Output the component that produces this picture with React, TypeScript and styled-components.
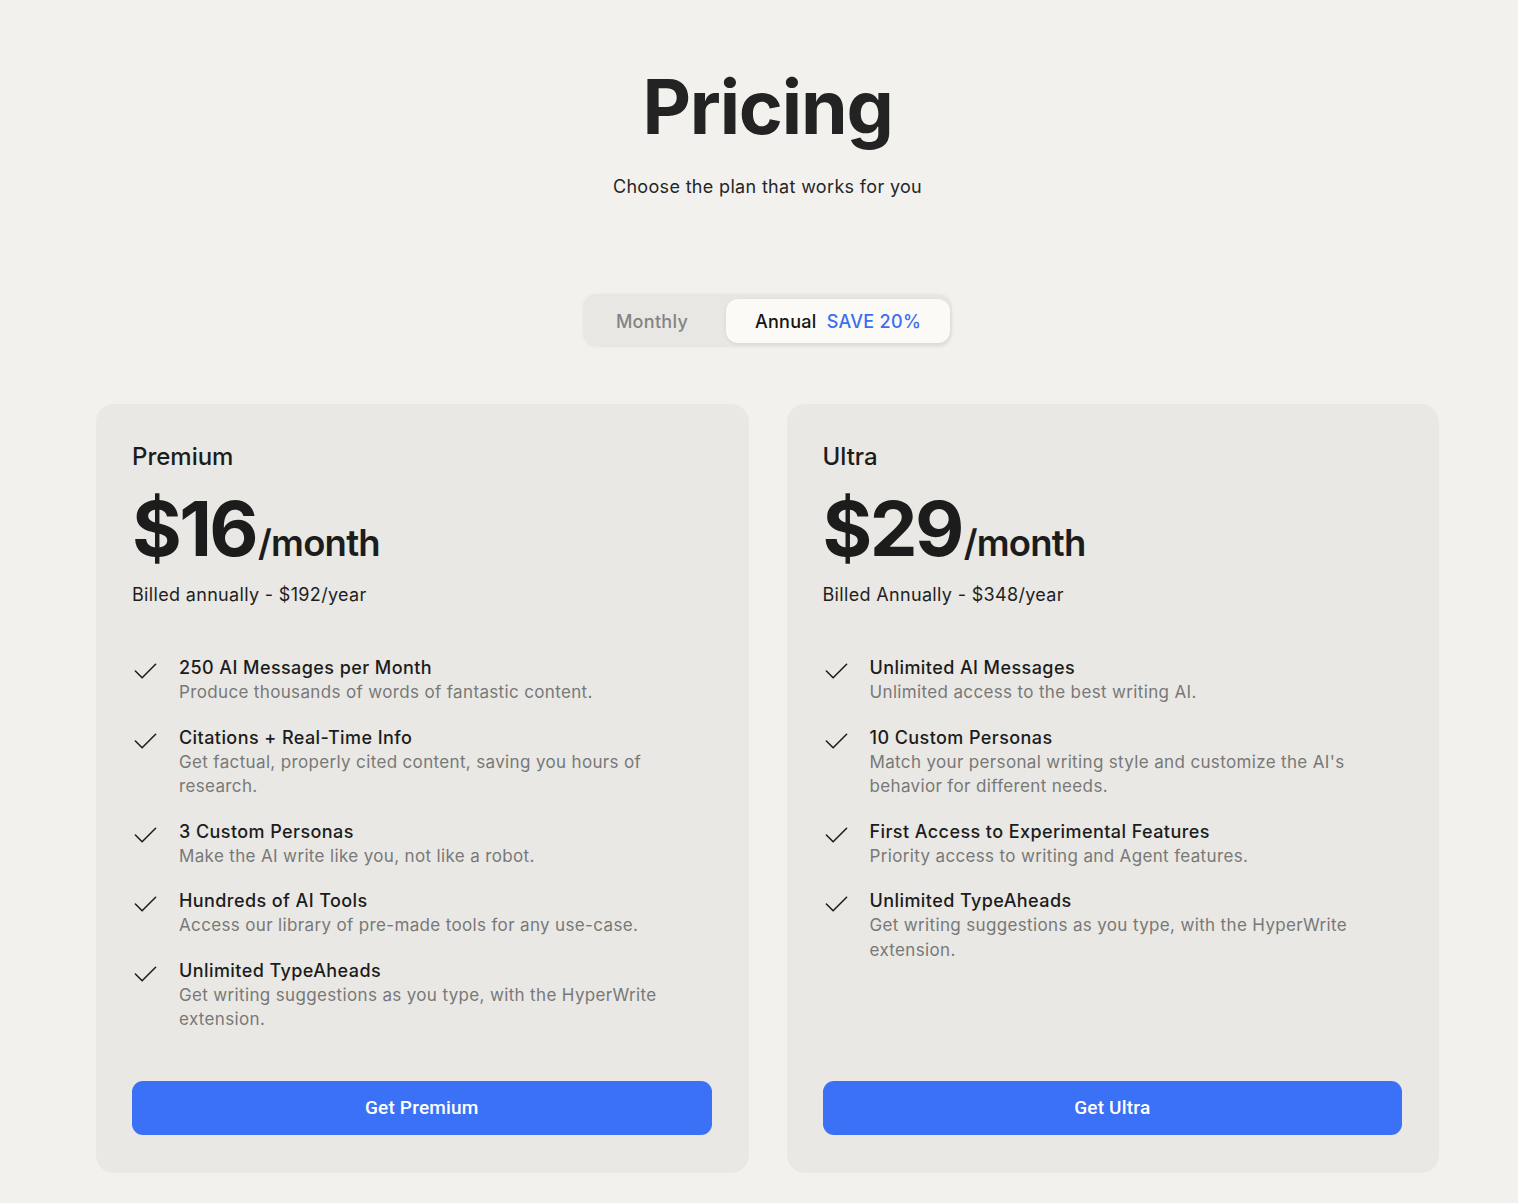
import * as React from "react"
import styled, { createGlobalStyle } from "styled-components"

const GlobalStyle = createGlobalStyle`
  html, body {
    margin: 0;
    padding: 0;
    background: #f2f1ee;
    font-family: Inter, "Noto Sans", sans-serif;
    color: #1f1f1f;
  }
`

const Page = styled.div`
  padding: 54px 79px 30px 96px;
  display: flex;
  flex-direction: column;
  align-items: center;
`

const Title = styled.h1`
  margin: 0;
  font-size: 75px;
  line-height: 106px;
  font-weight: 700;
  letter-spacing: -1.2px;
  color: #232323;
`

const Subtitle = styled.p`
  margin: 15px 0 0;
  font-size: 18px;
  line-height: 24px;
  letter-spacing: 0.33px;
  color: #262626;
`

const Toggle = styled.div`
  margin-top: 95px;
  display: flex;
  align-items: center;
  padding: 5px 2px 4px 5px;
  background: #e8e7e3;
  border-radius: 14px;
  box-shadow: 0 0 4px rgba(0, 0, 0, 0.04);
`

const ToggleOption = styled.div<{ $active?: boolean }>`
  height: 44px;
  display: flex;
  align-items: center;
  justify-content: center;
  gap: 10px;
  width: ${p => (p.$active ? "224px" : "138px")};
  padding-right: ${p => (p.$active ? "0" : "10px")};
  box-sizing: border-box;
  border-radius: 12px;
  font-size: 18px;
  font-weight: 500;
  letter-spacing: 0.3px;
  color: ${p => (p.$active ? "#141414" : "#838383")};
  background: ${p => (p.$active ? "#fbfaf7" : "transparent")};
  box-shadow: ${p => (p.$active ? "0 1px 4px rgba(0,0,0,0.08)" : "none")};
`

const Save = styled.span`
  color: #3b6ef0;
`

const Cards = styled.div`
  margin-top: 57px;
  width: 100%;
  display: grid;
  grid-template-columns: 1fr 1fr;
  gap: 38px;
`

const Card = styled.div`
  background: #e9e8e4;
  border-radius: 18px;
  padding: 38px 37px 38px 36px;
  display: flex;
  flex-direction: column;
`

const PlanName = styled.div`
  font-size: 24px;
  line-height: 30px;
  font-weight: 500;
  color: #1c1c1c;
`

const PriceRow = styled.div`
  margin-top: 14px;
  display: flex;
  align-items: baseline;
  color: #1c1c1c;
`

const Amount = styled.span`
  font-size: 76px;
  line-height: 84px;
  font-weight: 700;
  letter-spacing: -2.6px;
`

const Per = styled.span`
  font-size: 36.5px;
  font-weight: 600;
  letter-spacing: -0.8px;
  margin-left: 2px;
`

const Billed = styled.div`
  margin-top: 13px;
  font-size: 18px;
  line-height: 24px;
  letter-spacing: 0.33px;
  color: #1f1f1f;
`

const Features = styled.ul`
  list-style: none;
  margin: 48px 0 0;
  padding: 0;
  display: flex;
  flex-direction: column;
  gap: 20px;
`

const Feature = styled.li`
  display: flex;
  gap: 20px;
`

const Check = styled.svg`
  flex: none;
  width: 27px;
  height: 27px;
  margin-top: 2px;
`

const FeatureTitle = styled.div`
  font-size: 18px;
  line-height: 25px;
  font-weight: 500;
  letter-spacing: 0.42px;
  color: #1c1c1c;
`

const FeatureDesc = styled.div`
  font-size: 17px;
  line-height: 24.5px;
  color: #787878;
  letter-spacing: 0.35px;
  max-width: 500px;
`

const CTA = styled.button`
  margin-top: auto;
  height: 54px;
  width: 100%;
  border: none;
  border-radius: 11px;
  background: #3b71f6;
  color: #fff;
  font-family: Roboto, "Liberation Sans", sans-serif;
  font-size: 19px;
  font-weight: 500;
  letter-spacing: 0.2px;
  cursor: pointer;
`

const Spacer = styled.div`
  min-height: 49px;
  flex: 1;
`

type Plan = {
  name: string
  price: string
  billed: string
  features: { title: string; desc: string }[]
  cta: string
}

const plans: Plan[] = [
  {
    name: "Premium",
    price: "$16",
    billed: "Billed annually - $192/year",
    cta: "Get Premium",
    features: [
      { title: "250 AI Messages per Month", desc: "Produce thousands of words of fantastic content." },
      { title: "Citations + Real-Time Info", desc: "Get factual, properly cited content, saving you hours of research." },
      { title: "3 Custom Personas", desc: "Make the AI write like you, not like a robot." },
      { title: "Hundreds of AI Tools", desc: "Access our library of pre-made tools for any use-case." },
      { title: "Unlimited TypeAheads", desc: "Get writing suggestions as you type, with the HyperWrite extension." },
    ],
  },
  {
    name: "Ultra",
    price: "$29",
    billed: "Billed Annually - $348/year",
    cta: "Get Ultra",
    features: [
      { title: "Unlimited AI Messages", desc: "Unlimited access to the best writing AI." },
      { title: "10 Custom Personas", desc: "Match your personal writing style and customize the AI's behavior for different needs." },
      { title: "First Access to Experimental Features", desc: "Priority access to writing and Agent features." },
      { title: "Unlimited TypeAheads", desc: "Get writing suggestions as you type, with the HyperWrite extension." },
    ],
  },
]

const CheckIcon = () => (
  <Check viewBox="0 0 24 24" fill="none" stroke="#1c1c1c" strokeWidth="1.4" strokeLinecap="round" strokeLinejoin="round">
    <path d="M3 12.5l6 6L21 6.5" />
  </Check>
)

const PlanCard = ({ plan }: { plan: Plan }) => (
  <Card>
    <PlanName>{plan.name}</PlanName>
    <PriceRow>
      <Amount>{plan.price}</Amount>
      <Per>/month</Per>
    </PriceRow>
    <Billed>{plan.billed}</Billed>
    <Features>
      {plan.features.map(f => (
        <Feature key={f.title}>
          <CheckIcon />
          <div>
            <FeatureTitle>{f.title}</FeatureTitle>
            <FeatureDesc>{f.desc}</FeatureDesc>
          </div>
        </Feature>
      ))}
    </Features>
    <Spacer />
    <CTA>{plan.cta}</CTA>
  </Card>
)

export default function App() {
  return (
    <>
      <GlobalStyle />
      <Page>
        <Title>Pricing</Title>
        <Subtitle>Choose the plan that works for you</Subtitle>
        <Toggle>
          <ToggleOption>Monthly</ToggleOption>
          <ToggleOption $active>
            Annual <Save>SAVE 20%</Save>
          </ToggleOption>
        </Toggle>
        <Cards>
          {plans.map(p => (
            <PlanCard key={p.name} plan={p} />
          ))}
        </Cards>
      </Page>
    </>
  )
}
